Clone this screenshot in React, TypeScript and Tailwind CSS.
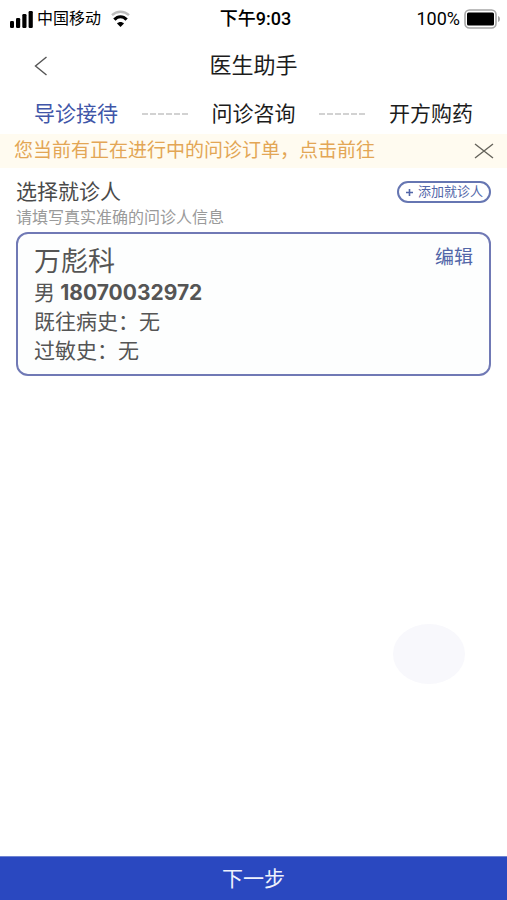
// src/App.tsx

import React, { useState } from 'react';

interface Patient {
  name: string;
  gender: string;
  phone: string;
  history: string;
  allergy: string;
}

const steps = ['导诊接待', '问诊咨询', '开方购药'];

const patient: Patient = {
  name: '万彪科',
  gender: '男',
  phone: '18070032972',
  history: '无',
  allergy: '无',
};

const SignalIcon = () => (
  <svg width="23" height="18" viewBox="0 0 23 18" fill="#000" aria-hidden="true">
    <rect x="0" y="11" width="4" height="7" rx="1.2" />
    <rect x="6" y="8" width="4.2" height="10" rx="1.2" />
    <rect x="12.3" y="4" width="4.2" height="14" rx="1.2" />
    <rect x="18.6" y="1" width="4.2" height="17" rx="1.2" />
  </svg>
);

const WifiIcon = () => (
  <svg width="19" height="18" viewBox="0 0 19 18" fill="none" aria-hidden="true">
    <path d="M1 5.2C5.8 0.6 13.2 0.6 18 5.2" stroke="#bdbdbd" strokeWidth="2.4" />
    <path d="M3.4 9.6C7 5.8 12 5.8 15.6 9.6" stroke="#000" strokeWidth="3.2" />
    <path d="M9.5 17L6 13.4C8 11.4 11 11.4 13 13.4Z" fill="#000" />
  </svg>
);

const BatteryIcon = () => (
  <svg width="37" height="20" viewBox="0 0 37 20" fill="none" aria-hidden="true">
    <rect x="1" y="1" width="31" height="18" rx="4.5" stroke="#a6a6a6" strokeWidth="1.6" />
    <rect x="3" y="3.5" width="27" height="13" rx="1.5" fill="#000" />
    <path d="M34 7C36.6 7.5 36.6 12.5 34 13Z" fill="#a6a6a6" />
  </svg>
);

const StatusBar = () => (
  <div className="grid grid-cols-[1fr_auto_1fr] items-center h-9.5 pl-2.5 pr-1.5 text-black">
    <div className="flex items-center">
      <SignalIcon />
      <span className="ml-1 mr-2.5 text-base">中国移动</span>
      <WifiIcon />
    </div>
    <span className="text-lg font-medium">下午9:03</span>
    <div className="flex items-center justify-end gap-1">
      <span className="text-lg">100%</span>
      <BatteryIcon />
    </div>
  </div>
);

const App: React.FC = () => {
  const [showNotice, setShowNotice] = useState(true);

  return (
    <div className="relative flex flex-col min-h-screen bg-white text-[#1c1c1c] font-[Roboto,'Noto_Sans_CJK_SC',sans-serif]">
      <StatusBar />

      {/* Header */}
      <header className="grid grid-cols-[1fr_auto_1fr] items-center h-14 px-8">
        <button type="button" aria-label="返回" className="w-5">
          <svg width="16" height="20" viewBox="0 0 16 20" fill="none" stroke="#555" strokeWidth="1.4">
            <path d="M14.5 1L3.5 10L14.5 19" />
          </svg>
        </button>
        <h1 className="text-[22px] leading-8">医生助手</h1>
      </header>

      {/* Steps */}
      <ol className="flex items-center justify-between h-10 px-8.5 text-[21px] leading-8">
        {steps.map((step, index) => (
          <React.Fragment key={step}>
            {index > 0 && (
              <li aria-hidden="true">
                <svg width="46" height="2" viewBox="0 0 46 2">
                  <path d="M0 1H46" stroke="#d2d2d2" strokeWidth="2" strokeDasharray="6 2" />
                </svg>
              </li>
            )}
            <li className={index === 0 ? 'text-[#4056a8]' : ''}>{step}</li>
          </React.Fragment>
        ))}
      </ol>

      {/* Order notice */}
      {showNotice && (
        <div className="flex items-center justify-between h-8.5 pl-3.5 pr-3 bg-[#fffbf0]">
          <a href="#order" className="text-[19px] leading-8 text-[#e3a655]">
            您当前有正在进行中的问诊订单，点击前往
          </a>
          <button type="button" aria-label="关闭" onClick={() => setShowNotice(false)}>
            <svg width="22" height="18" viewBox="0 0 22 18" fill="none" stroke="#66645c" strokeWidth="1.4">
              <path d="M2 2L20 16M20 2L2 16" />
            </svg>
          </button>
        </div>
      )}

      <main className="flex-1 px-4 pt-2">
        <div className="flex items-center justify-between">
          <h2 className="text-[21px] leading-8 text-[#4a4a4a]">选择就诊人</h2>
          <button
            type="button"
            className="flex items-center gap-1 h-5.5 px-1.5 border-2 border-[#6676b2] rounded-full text-[13px] leading-5 text-[#5266a8]"
          >
            <svg width="9" height="9" viewBox="0 0 9 9" stroke="#5266a8" strokeWidth="1.6">
              <path d="M4.5 1V8M1 4.5H8" />
            </svg>
            添加就诊人
          </button>
        </div>
        <p className="text-base leading-5 text-[#9a9a9a]">请填写真实准确的问诊人信息</p>

        {/* Patient card */}
        <section className="flex items-start justify-between mt-1 pt-3 pb-2 px-4 border-2 border-[#7079b5] rounded-xl bg-[#fdfefe] text-[21px] leading-[29px] text-[#555]">
          <div>
            <h3 className="text-[27px] leading-8">{patient.name}</h3>
            <p>
              {patient.gender}{' '}
              <span className="text-[21px] font-bold font-[Inter,sans-serif]">{patient.phone}</span>
            </p>
            <p>既往病史：{patient.history}</p>
            <p>过敏史：{patient.allergy}</p>
          </div>
          <button type="button" className="text-[19px] leading-6 text-[#5266a8]">编辑</button>
        </section>
      </main>

      {/* Floating touch button */}
      <button
        type="button"
        aria-label="辅助功能"
        className="absolute right-10.5 bottom-54 w-18 h-15 rounded-[50%] bg-[#f8f8fc]"
      />

      <button type="button" className="h-11 bg-[#2a48c0] border-t border-[#6f84d2] text-[21px] leading-8 text-[#eef1fc]">
        下一步
      </button>
    </div>
  );
};

export default App;
